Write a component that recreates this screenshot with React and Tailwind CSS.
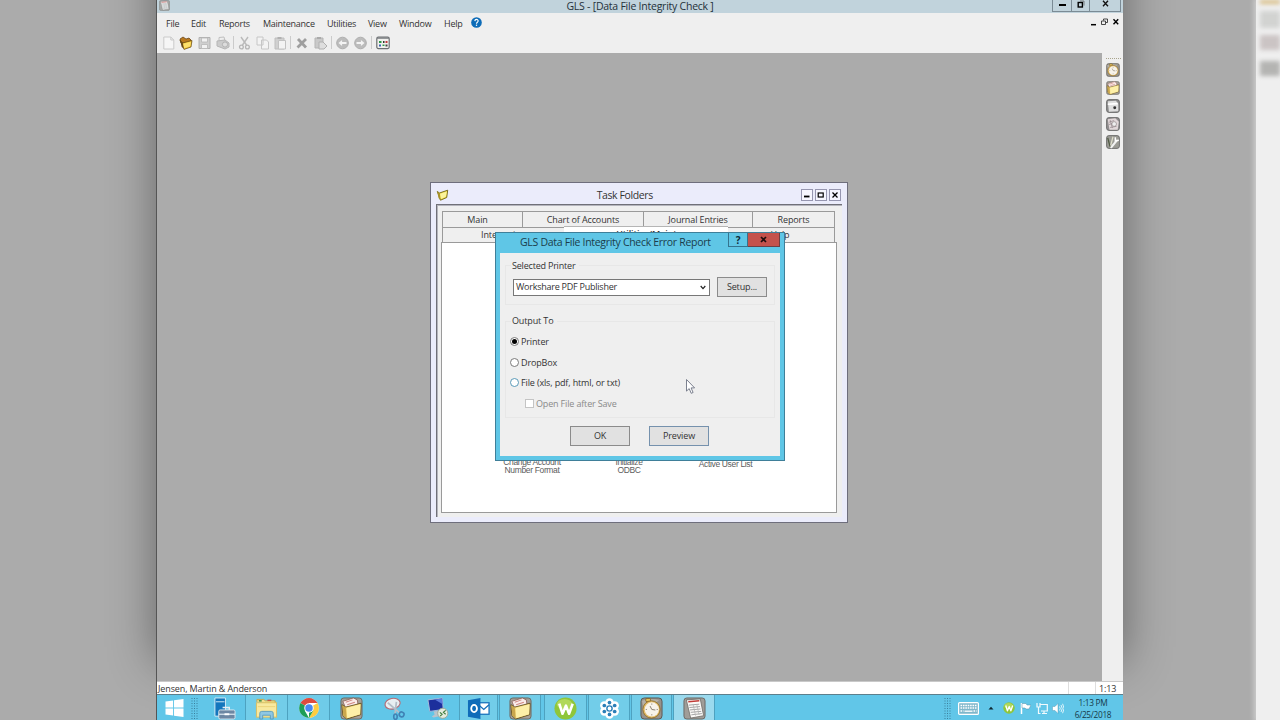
import React from "react";

const FONT = "font-['Open_Sans','Noto_Sans',sans-serif]";

/* ---------- shared drawings ---------- */

function FolderIcon({ className, framed }) {
  return (
    <svg className={className} viewBox="0 0 24 24">
      {framed && <rect x="1" y="1" width="22" height="22" rx="3" fill="#a39f97" stroke="#6b6862" />}
      <path d="M3 4.500 L14 1 L18 3 L19 9 L6 12Z" fill="#faecea" stroke="#8a5a50" strokeWidth=".8" />
      <path d="M6 5.500l7-2.500M7.500 8l8-2.500" stroke="#d08982" strokeWidth="1.100" />
      <path d="M2 8 L6 10.500 L22 6.500 L21.500 18.500 L7 23 L3 19.500Z" fill="#f5d97a" stroke="#5d4a1c" strokeWidth=".9" />
      <path d="M7 11.500 L21.500 7.500 L21 18 L7.500 22Z" fill="#fdf0a8" />
      <path d="M2.500 8.500 L6 11 L7 22.500 L3.400 19.300Z" fill="#c9a64c" />
    </svg>
  );
}

function ClockIcon({ className }) {
  return (
    <svg className={className} viewBox="0 0 24 24">
      <rect x="1" y="1" width="22" height="22" rx="3.5" fill="#96928c" stroke="#5b5853" />
      <path d="M2 4 Q9 1 20 3 L14 8 L4 12Z" fill="#b4afa6" />
      <rect x="6" y="1.5" width="5" height="3.4" rx="1.2" fill="#e3c05d" stroke="#7c5c17" strokeWidth=".8" />
      <circle cx="12" cy="13" r="9" fill="#e3bd6c" stroke="#8c6c27" strokeWidth=".9" />
      <circle cx="12.3" cy="13" r="7.4" fill="#f7f3ea" />
      <path d="M12.3 13 L10.500 9.500 M12.3 13 L16 13.6" stroke="#857a68" strokeWidth="1" />
      <path d="M12.3 6.800v1.200M12.3 18v1.200M6 13h1.200M17.400 13h1.200" stroke="#857a68" strokeWidth=".9" />
    </svg>
  );
}

function ReportIcon({ className }) {
  return (
    <svg className={className} viewBox="0 0 24 24">
      <rect x="1" y="1" width="22" height="22" rx="3" fill="#a09d98" stroke="#6a6864" />
      <path d="M3.500 3 L18 2 L21.500 19.500 L8 22Z" fill="#fbfaf8" stroke="#6a6763" strokeWidth=".8" />
      <path d="M5.500 5 L17 4" stroke="#c13b36" strokeWidth="1.500" />
      <path d="M6 8.500l11-1M6.700 11l11-1M7.300 13.500l11-1M8 16l11-1M8.700 18.600l11-1.3" stroke="#a0a0a0" strokeWidth="1" />
      <path d="M10.500 7.500l2.600 12M14.300 7.300l2.500 11.500" stroke="#b5b5b5" strokeWidth=".8" />
    </svg>
  );
}

function WebBall({ className }) {
  return (
    <svg className={className} viewBox="0 0 24 24">
      <circle cx="12" cy="12" r="11.500" fill="#8fc63a" />
      <ellipse cx="11" cy="7.5" rx="8" ry="5.5" fill="#bfe06a" opacity=".7" />
      <path d="M5.500 7 L8.900 17.5 L12.500 9 L15.700 17.5 L19.500 7" fill="none" stroke="#fff" strokeWidth="2.7" strokeLinejoin="round" />
    </svg>
  );
}

const Sep = ({ className = "" }) => <span className={`h-[13px] w-px shrink-0 bg-[#cbcbcb] ${className}`} />;

/* ---------- top bars ---------- */

function TitleBar() {
  return (
    <div className="flex h-[13px] shrink-0 bg-[#c1d3dc] text-[#25313a]">
      <div className="w-[71px] pl-[2px]">
        <ReportIcon className="-mt-px h-[13px] w-[11px] opacity-80" />
      </div>
      <div className="flex-1 text-center text-[10.5px] leading-[12px] tracking-[-0.24px]">GLS - [Data File Integrity Check ]</div>
      <div className="mr-[2px] flex h-[12px] w-[69px] border border-t-0 border-[#7b8b95] text-black">
        <span className="flex w-[19px] justify-center border-r border-[#7b8b95] pt-[4px]">
          <i className="h-[2px] w-[7px] bg-black" />
        </span>
        <span className="flex w-[18px] justify-center border-r border-[#7b8b95]">
          <svg className="h-[10px] w-[8px]" viewBox="0 0 8 10">
            <rect x="1.200" y="2.500" width="4.200" height="4.500" fill="none" stroke="#000" strokeWidth="1.4" />
            <path d="M3 1h4v4.6" fill="none" stroke="#555" strokeWidth=".7" />
          </svg>
        </span>
        <span className="flex flex-1 justify-center">
          <svg className="h-[7px] w-[7px]" viewBox="0 0 7 7"><path d="M1 .7 6 6.2M6 .7 1 6.2" stroke="#111" strokeWidth="1.3" /></svg>
        </span>
      </div>
    </div>
  );
}

const MENU = [
  ["File", "w-[25px]"],
  ["Edit", "w-[28px]"],
  ["Reports", "w-[44px]"],
  ["Maintenance", "w-[64px]"],
  ["Utilities", "w-[41px]"],
  ["View", "w-[31px]"],
  ["Window", "w-[45px]"],
  ["Help", "w-[27px]"],
];

function MenuBar() {
  return (
    <div className="flex h-[21px] shrink-0 items-center pl-[9px] text-[9px] leading-[12px] tracking-[-0.26px] text-[#333]">
      {MENU.map(([label, w]) => (
        <span key={label} className={`${w} shrink-0 whitespace-nowrap`}>{label}</span>
      ))}
      <svg className="-mt-[2px] h-[11px] w-[11px]" viewBox="0 0 12 12">
        <circle cx="6" cy="6" r="5.8" fill="#0d6cb8" />
        <path d="M4.2 4.5C4.3 2 7.9 2.2 7.8 4.4 7.7 5.8 6 5.8 6 7.3" fill="none" stroke="#fff" strokeWidth="1.3" />
        <rect x="5.3" y="8.3" width="1.4" height="1.4" fill="#fff" />
      </svg>
      <span className="flex-1" />
      <svg className="mr-[4px] -mt-[3px] h-[8px] w-[28px]" viewBox="0 0 28 8">
        <path d="M0 6.7h5" stroke="#000" strokeWidth="1.5" />
        <path d="M12.5 2.5V1h4v3.5H15M10.5 3h4v3.5h-4z" fill="none" stroke="#333" strokeWidth=".9" />
        <path d="M22.5 1.2l4.7 5M27.2 1.2l-4.7 5" stroke="#000" strokeWidth="1.4" />
      </svg>
    </div>
  );
}

function ToolBar() {
  const g = "#c0c0c0";
  return (
    <div className="flex h-[19px] shrink-0 items-start pl-[6px] pt-[2px]">
      <svg className="h-[14px] w-[13px]" viewBox="0 0 13 14"><path d="M.8 1h7l3 3v9h-10zM7.8 1v3h3" fill="#f6f6f6" stroke="#cacaca" /></svg>
      <svg className="ml-[3px] h-[14px] w-[14px]" viewBox="0 0 14 14">
        <path d="M1 3l3-2 3 2 3-1 2 2v3H2z" fill="#b9791e" stroke="#5d3a10" strokeWidth=".7" />
        <path d="M1 4l2.5 3 9.5-2.500-1 6.500-7 2.4z" fill="#f2c230" stroke="#604512" strokeWidth=".7" />
        <path d="M4 7.7l8-2-.8 4.500-6 2z" fill="#fde06a" />
        <path d="M1 3.8l3 3.600.7 5.200-2-1.600z" fill="#6b4a17" />
      </svg>
      <svg className="ml-[5px] h-[14px] w-[13px]" viewBox="0 0 13 14"><path d="M1 1.5h11v11H1z" fill="#cfcfcf" stroke="#b2b2b2" /><path d="M3.5 2h6v4h-6zM3.5 8.5h6v4h-6z" fill="#f1f1f1" stroke="#b8b8b8" strokeWidth=".8" /></svg>
      <svg className="ml-[5px] h-[14px] w-[14px]" viewBox="0 0 14 14"><path d="M3 5V1.5l5-.5 1 4" fill="#eee" stroke={g} /><path d="M1 5l8-1 4 3v4l-4 2-8-3z" fill="#cbcbcb" stroke="#b5b5b5" /><circle cx="9" cy="8.5" r="2.6" fill="#ddd" stroke="#b2b2b2" /></svg>
      <Sep className="ml-[3px]" />
      <svg className="ml-[4px] h-[14px] w-[13px]" viewBox="0 0 13 14"><path d="M3 1l5.5 8M10 1L4.5 9" stroke="#bababa" strokeWidth="1.4" /><circle cx="3.4" cy="11" r="1.9" fill="none" stroke="#b5b5b5" strokeWidth="1.3" /><circle cx="9.4" cy="11" r="1.9" fill="none" stroke="#b5b5b5" strokeWidth="1.3" /></svg>
      <svg className="ml-[5px] h-[14px] w-[14px]" viewBox="0 0 14 14"><path d="M1 1h6v8H1zM5.5 4h5l2 2v7h-7z" fill="#f3f3f3" stroke="#c6c6c6" /></svg>
      <svg className="ml-[4px] h-[14px] w-[13px]" viewBox="0 0 13 14"><path d="M1 2h9v11H1z" fill="#d0d0d0" stroke="#bebebe" /><path d="M4.5 4.5h7V13h-7z" fill="#f3f3f3" stroke="#c2c2c2" /><path d="M3.5 1h4v2h-4z" fill="#b0b0b0" /></svg>
      <Sep className="ml-[3px]" />
      <svg className="ml-[5px] h-[14px] w-[13px]" viewBox="0 0 13 14"><path d="M2 3l8 8.5M10 3l-8.5 8.5" stroke="#9f9f9f" strokeWidth="2.800" /></svg>
      <svg className="ml-[5px] h-[14px] w-[14px]" viewBox="0 0 14 14"><path d="M1 2h8v10H1z" fill="#c9c9c9" stroke="#b5b5b5" /><path d="M3 1h4v2H3z" fill="#aaa" /><path d="M5 6h4l4 4-3 3H5z" fill="#dedede" stroke="#b0b0b0" /></svg>
      <Sep className="ml-[3px]" />
      <svg className="ml-[4px] h-[14px] w-[14px]" viewBox="0 0 14 14"><circle cx="6.500" cy="7" r="5.800" fill="#bcbcbc" stroke="#aeaeae" /><path d="M2.500 7l3.6-3v2h4.400v2H6.100v2z" fill="#f4f4f4" /></svg>
      <svg className="ml-[4px] h-[14px] w-[14px]" viewBox="0 0 14 14"><circle cx="6.500" cy="7" r="5.800" fill="#bcbcbc" stroke="#aeaeae" /><path d="M10.500 7L6.900 4v2H2.500v2h4.400v2z" fill="#f4f4f4" /></svg>
      <Sep className="ml-[3px]" />
      <svg className="ml-[4px] h-[14px] w-[14px]" viewBox="0 0 14 14">
        <rect x=".8" y="1.200" width="12.400" height="11.400" rx="1.500" fill="#f1f1ee" stroke="#6b6f72" strokeWidth="1.200" />
        <path d="M1 2.200h12" stroke="#7d8184" strokeWidth="1.200" />
        <path d="M3 5h2.500v2H3z" fill="#2c9a47" /><path d="M7 5h1.500v2H7z" fill="#333" /><path d="M9.500 5h2v2h-2z" fill="#c43a3a" />
        <path d="M3 8.500h2v2H3z" fill="#3c60b5" /><path d="M6.500 8.500h2v1.500h-2z" fill="#2c9a47" /><path d="M9.500 8.500h2v2h-2z" fill="#444" />
      </svg>
    </div>
  );
}

/* ---------- side toolbar ---------- */

function SideBar() {
  const box = "h-[14px] w-[14px]";
  return (
    <div className="flex w-[21px] shrink-0 flex-col items-start gap-[4px] bg-[#efefef] pl-[3.500px] pt-[4.500px]">
      <span className="h-px w-[15px] border-t border-dotted border-[#a8a48c]" />
      <ClockIcon className={box} />
      <FolderIcon className={box} framed />
      <svg className={box} viewBox="0 0 24 24">
        <rect x="1" y="1" width="22" height="22" rx="4" fill="#8b8b8b" stroke="#666" strokeWidth="1.500" />
        <path d="M3 4l14-1 4 5v13l-16 1z" fill="#dedede" /><path d="M3 9l17-1" stroke="#fff" strokeWidth="3" /><circle cx="15" cy="15" r="2.500" fill="#333" />
      </svg>
      <svg className={box} viewBox="0 0 24 24">
        <rect x="1" y="1" width="22" height="22" rx="4" fill="#928f90" stroke="#666" strokeWidth="1.500" />
        <path d="M3 4l13-2 6 6-2 14-14 0z" fill="#e2d8da" /><path d="M5 9l9-3M5 13l6-2M7 18l11-2M7 5l4 14" stroke="#8d7f83" strokeWidth="1.100" /><circle cx="14" cy="12" r="4" fill="#eee" stroke="#857a7c" />
      </svg>
      <svg className={box} viewBox="0 0 24 24">
        <rect x="1" y="1" width="22" height="22" rx="4" fill="#9b9b95" stroke="#666" strokeWidth="1.500" />
        <path d="M9 21L18 10" stroke="#f2f2f2" strokeWidth="3.600" strokeLinecap="round" /><path d="M16 4l0 6 6-1" fill="none" stroke="#fff" strokeWidth="2.600" />
        <path d="M3 5l4 15" stroke="#4f5a43" strokeWidth="2.200" /><path d="M12 3L8 18" stroke="#dfe0cc" strokeWidth="2" />
      </svg>
    </div>
  );
}

/* ---------- Task Folders window ---------- */

function WinBtn({ children }) {
  return (
    <span className="flex h-[12px] w-[12px] items-center justify-center border border-[#9696b0] bg-[#f6f6ff]">
      <svg className="h-[8px] w-[8px]" viewBox="0 0 8 8">{children}</svg>
    </span>
  );
}

function TaskFolders() {
  const tab = "flex items-center justify-center border-[#9a9a9a] bg-[#efefef]";
  const icon = "absolute text-center font-['Liberation_Sans',sans-serif] text-[8.500px] leading-[8px] tracking-[-0.35px] text-[#5c5c5c] whitespace-nowrap";
  return (
    <div className="absolute left-[273px] top-[182px] flex h-[341px] w-[418px] flex-col border border-[#6e6e7c] bg-[#ebecfb] px-[5px] pb-[5px] text-[9px] tracking-[-0.12px] text-[#333]">
      <div className="flex h-[21px] shrink-0 items-center pt-[3px]">
        <svg className="h-[12px] w-[13px]" viewBox="0 0 12 12">
          <path d="M.8 2.500L3 4l8.200-2.800-1 7.300-6.200 2.700z" fill="#f0d93e" stroke="#6e6212" strokeWidth=".9" />
          <path d="M3.600 4.700l6.700-2.200-.9 5.300-5 2.100z" fill="#fbf39c" /><path d="M.8 2.500L3.300 4.300 4 11.200 2 9z" fill="#a8932a" />
        </svg>
        <span className="flex-1 text-center text-[10.500px] leading-[12px] tracking-[-0.4px]">Task Folders</span>
        <span className="mr-[1.500px] flex gap-[2px]">
          <WinBtn><path d="M1 5.500h5.500" stroke="#000" strokeWidth="1.800" /></WinBtn>
          <WinBtn><rect x="1.200" y="2" width="5" height="4" fill="none" stroke="#000" strokeWidth="1.200" /></WinBtn>
          <WinBtn><path d="M1.500 1.500l5 5M6.500 1.500l-5 5" stroke="#000" strokeWidth="1.300" /></WinBtn>
        </span>
      </div>
      <div className="flex min-h-0 flex-1 flex-col border-l border-t border-[#707078] bg-[#efefef] pl-[4px] pr-[5px] pt-[6px] shadow-[inset_1px_1px_0_#b5b5bd]">
        <div className="ml-[1px] mr-[2px] flex h-[16px] shrink-0 border-l border-t border-[#9a9a9a]">
          <span className={`${tab} w-[80px] border-r pr-[10px] pt-px`}>Main</span>
          <span className={`${tab} w-[121px] border-r pt-px`}>Chart of Accounts</span>
          <span className={`${tab} w-[109px] border-r pt-px`}>Journal Entries</span>
          <span className={`${tab} flex-1 border-r pt-px`}>Reports</span>
        </div>
        <div className="ml-[1px] mr-[2px] flex h-[15px] shrink-0">
          <span className={`${tab} w-[122px] border-l border-t`}>Integration</span>
          <span className="relative -mt-[1px] flex w-[164px] items-center justify-center border-t border-[#b5b5b5] bg-white pb-px pl-px font-semibold">Utilities/Maint</span>
          <span className={`${tab} flex-1 border-r border-t pr-[2px]`}>Help</span>
        </div>
        <div className="relative mb-[4px] flex-1 border border-[#9a9a9a] bg-white">
          <div className={`${icon} left-[52px] top-[215px] w-[76px]`}>Change Account<br />Number Format</div>
          <div className={`${icon} left-[156px] top-[215px] w-[62px]`}>Initialize<br />ODBC</div>
          <div className={`${icon} left-[243px] top-[217px] w-[81px]`}>Active User List</div>
        </div>
      </div>
    </div>
  );
}

/* ---------- Report dialog ---------- */

function Radio({ on, label, tint }) {
  return (
    <div className="flex h-[12px] items-center">
      <span className={`mb-[1px] flex h-[9px] w-[9px] items-center justify-center rounded-full border bg-white ${tint ? "border-[#5a9ab8]" : "border-[#7b7b7b]"}`}>
        {on && <i className="h-[5px] w-[5px] rounded-full bg-black" />}
      </span>
      <span className="ml-[2px] tracking-[-0.14px]">{label}</span>
    </div>
  );
}

function ReportDialog() {
  const btn = "flex items-center justify-center border bg-[#e1e1e1]";
  return (
    <div className="absolute left-[338px] top-[232px] flex h-[229px] w-[290px] flex-col border border-[#3f7f99] bg-[#5fc6e6] px-[4px] pb-[4px] text-[9px] leading-[12px] tracking-[-0.14px] text-[#333]">
      <div className="flex h-[20px] shrink-0">
        <span className="w-[229px] pl-[20px] pt-[3px] text-[10.500px] leading-[13px] tracking-[-0.3px] whitespace-nowrap text-[#1b3d4b]">GLS Data File Integrity Check Error Report</span>
        <span className="flex h-[14px] w-[20px] items-center justify-center border-x border-b border-[#34748f] text-[10px] font-bold text-[#0d2a36]">?</span>
        <span className="flex h-[14px] w-[32px] items-center justify-center border-b border-r border-[#6e3f44] bg-[#c4524c]">
          <svg className="h-[7px] w-[7px]" viewBox="0 0 7 7"><path d="M1 1l5 5M6 1L1 6" stroke="#1d0d0d" strokeWidth="1.700" /></svg>
        </span>
      </div>
      <div className="flex flex-1 flex-col bg-[#efefef] pl-[5px] pr-[5px] pt-[12px]">
        <fieldset className="h-[40px] border border-[#e7e7e7] pl-[7px] pt-[13px]">
          <div className="-ml-[2px] -mt-[19px] flex h-[12px] w-[68px] bg-[#efefef] pl-px whitespace-nowrap tracking-[-0.2px]">Selected Printer</div>
          <div className="mt-[4px] flex items-center">
            <div className="mt-px flex h-[17px] w-[197px] items-center justify-between border border-[#777] bg-white pl-[2px] pr-[3px]">
              <span className="tracking-[-0.24px]">Workshare PDF Publisher</span>
              <svg className="h-[5px] w-[6px]" viewBox="0 0 6 5"><path d="M.7 1l2.300 2.600L5.300 1" fill="none" stroke="#222" strokeWidth="1.200" /></svg>
            </div>
            <div className={`${btn} ml-[7px] mt-[1px] h-[20px] w-[50px] border-[#8b8b8b]`}>Setup...</div>
          </div>
        </fieldset>
        <fieldset className="mt-[16px] h-[97px] border border-[#e7e7e7] pl-[4px]">
          <div className="-mt-[7px] ml-[1px] flex h-[12px] w-[46px] bg-[#efefef] pl-px whitespace-nowrap">Output To</div>
          <div className="mt-[9px] flex flex-col gap-[8.500px]">
            <Radio on label="Printer" />
            <Radio label="DropBox" />
            <Radio tint label="File (xls, pdf, html, or txt)" />
            <div className="flex h-[12px] items-center pl-[15px] text-[#8a8a8a]">
              <span className="h-[9px] w-[9px] border border-[#c4c4c4] bg-white" />
              <span className="ml-[2px] tracking-[-0.16px]">Open File after Save</span>
            </div>
          </div>
        </fieldset>
        <div className="mt-[8px] flex gap-[19px] pl-[65px]">
          <div className={`${btn} h-[20px] w-[60px] border-[#8b8b8b]`}>OK</div>
          <div className={`${btn} h-[20px] w-[60px] border-[#7591ad]`}>Preview</div>
        </div>
      </div>
    </div>
  );
}

/* ---------- taskbar ---------- */

function Grip() {
  return (
    <svg className="h-[25px] w-[7px] shrink-0" viewBox="0 0 7 25">
      <path d="M1 3v22M3.500 3v22M6 3v22" stroke="#3b7f9a" strokeWidth="1" strokeDasharray="1 1.500" />
    </svg>
  );
}

const I = "mt-[2px] h-[23px] w-[23px]";

const TASKS = [
  ["w-[42px]", "", (
    <svg className={I} viewBox="0 0 24 24">
      <path d="M2 1h11v19H2z" fill="#1376bd" stroke="#d5ecf7" strokeWidth="1" /><path d="M3 5h9" stroke="#d5ecf7" />
      <path d="M10 11h7v3" fill="none" stroke="#e8eef2" strokeWidth="1.500" /><rect x="6" y="13.500" width="17" height="9.500" rx="1.500" fill="#6d87a3" stroke="#d9e6ee" /><path d="M6 18h17" stroke="#d9e6ee" strokeWidth="1.300" /><path d="M12 17h5v2h-5z" fill="#fff" />
    </svg>)],
  ["w-[43px]", "border-x border-[#4da2c0] bg-[#72cde9]", (
    <svg className={I} viewBox="0 0 24 24">
      <path d="M2 5V2.500h7L11 4h10v4" fill="#f3df8b" stroke="#c4a64a" /><path d="M4 4h3" stroke="#3a8b45" strokeWidth="1.500" /><path d="M13 3.500h4" stroke="#c45846" strokeWidth="1.500" />
      <rect x="1.500" y="6" width="21" height="15" fill="#f8e99f" stroke="#d9bf62" /><path d="M3 10h18" stroke="#ead27a" />
      <path d="M5 23v-6q0-2 2-2h10q2 0 2 2v6h-3v-4H8v4z" fill="#8fc7e2" stroke="#5a9dbf" />
    </svg>)],
  ["w-[42px]", "border-r border-[#4da2c0] bg-[#6fcbe8]", (
    <svg className="mt-[2px] h-[22px] w-[22px]" viewBox="0 0 24 24">
      <circle cx="12" cy="12" r="10.800" fill="#fff" />
      <path d="M12 12L2.650 6.600A10.800 10.800 0 0 1 21.350 6.600H12z" fill="#dd4b3e" />
      <path d="M12 12L21.350 6.600A10.800 10.800 0 0 1 12 22.800L16.700 14.700z" fill="#fdcd41" />
      <path d="M12 12L7.300 14.700 12 22.800A10.800 10.800 0 0 1 2.650 6.600z" fill="#1e9e58" /><path d="M12 22.800l4.700-8.100-4.700 1z" fill="#1e9e58" />
      <circle cx="12" cy="12" r="5.200" fill="#fff" /><circle cx="12" cy="12" r="4.100" fill="#4688f1" />
    </svg>)],
  ["w-[43px]", "", <FolderIcon className={I} framed />],
  ["w-[43px]", "", (
    <svg className={I} viewBox="0 0 24 24">
      <ellipse cx="10" cy="7" rx="8" ry="5.500" fill="#e8eff2" stroke="#b46b75" strokeWidth="1.200" transform="rotate(-12 10 7)" />
      <path d="M5 6l13 11M14 5l-1.500 13" stroke="#b3bec8" strokeWidth="1.800" /><circle cx="19.500" cy="18" r="2.500" fill="none" stroke="#3f82b5" strokeWidth="1.700" transform="rotate(20 19 18)" /><ellipse cx="13" cy="20.500" rx="1.800" ry="2.800" fill="none" stroke="#3f82b5" strokeWidth="1.700" />
    </svg>)],
  ["w-[43px]", "", (
    <svg className={I} viewBox="0 0 24 24">
      <path d="M2 3l15-2 1 12-14 2z" fill="#1c2f9c" stroke="#a9bcd9" /><path d="M9 2.500l8-1 .5 6z" fill="#5b78dc" /><path d="M8 15l5-.7 1 4 3 1-9 2-2-1 3-2z" fill="#b9c3cc" />
      <circle cx="17.500" cy="17" r="5.300" fill="#e4ecdf" stroke="#9aa895" /><path d="M14.500 16l2.300 2-2 2M20.500 14l-2.300 2 2.300 2" fill="none" stroke="#3e7a3a" strokeWidth="1.200" />
    </svg>)],
  ["w-[39px]", "border-x border-[#4da2c0] bg-[#72cde9]", (
    <svg className={I} viewBox="0 0 24 24">
      <rect x="11" y="6" width="12" height="12" fill="#fff" stroke="#1570bb" strokeWidth="1.300" /><path d="M12 8l5.500 5L23 8" fill="none" stroke="#1570bb" strokeWidth="1.400" />
      <path d="M1 3.500L14 1v22L1 20.500z" fill="#0f6cb9" /><ellipse cx="7.400" cy="12" rx="3" ry="3.700" fill="none" stroke="#fff" strokeWidth="1.900" />
    </svg>)],
  ["w-[42px]", "ml-[1px] border-x border-[#4da2c0] bg-[#72cde9]", <FolderIcon className={I} framed />],
  ["w-[43px]", "ml-[3px] border-x border-[#4da2c0] bg-[#72cde9]", <WebBall className={I} />],
  ["w-[42px]", "ml-[1px] border-x border-[#4da2c0] bg-[#72cde9]", (
    <svg className="mt-[3px] h-[21px] w-[21px]" viewBox="0 0 24 24">
      <g fill="#fff">
        <circle cx="12" cy="5" r="4.800" /><circle cx="18" cy="8.500" r="4.800" /><circle cx="18" cy="15.500" r="4.800" /><circle cx="12" cy="19" r="4.800" /><circle cx="6" cy="15.500" r="4.800" /><circle cx="6" cy="8.500" r="4.800" /><circle cx="12" cy="12" r="6" />
      </g>
      <g fill="#2b7fb8">
        <circle cx="12" cy="5.200" r="2.100" /><circle cx="17.900" cy="8.600" r="2.100" /><circle cx="17.900" cy="15.400" r="2.100" /><circle cx="12" cy="18.800" r="2.100" /><circle cx="6.100" cy="15.400" r="2.100" /><circle cx="6.100" cy="8.600" r="2.100" />
      </g>
      <circle cx="12" cy="12" r="3" fill="#fff" stroke="#2b7fb8" strokeWidth="1.600" />
    </svg>)],
  ["w-[41px]", "ml-[1px] border-x border-[#4da2c0] bg-[#72cde9]", <ClockIcon className={I} />],
  ["w-[42px]", "ml-[1px] border-x border-[#4da2c0] bg-[#9bdaee]", <ReportIcon className={I} />],
];

function TaskBar() {
  return (
    <div className="flex h-[26px] shrink-0 overflow-hidden border-t border-[#5d7f8c] bg-[#61c6e8]">
      <div className="w-[34px] pl-[8px] pt-[4px]">
        <svg className="h-[18px] w-[19px]" viewBox="0 0 19 19"><path d="M0 2.700L8 1.500V9H0zM9 1.400L19 0v9H9zM0 10h8v7.500L0 16.300zM9 10h10v9L9 17.600z" fill="#fff" /></svg>
      </div>
      <Grip />
      <div className="ml-[5px] flex">
        {TASKS.map(([w, cls, icon], i) => (
          <div key={i} className={`flex shrink-0 justify-center ${w} ${cls}`}>{icon}</div>
        ))}
      </div>
      <span className="flex-1" />
      <Grip />
      <div className="flex w-[172px] shrink-0 pl-[7px]">
        <svg className="mt-[7px] h-[13px] w-[21px]" viewBox="0 0 21 13"><rect x=".6" y=".6" width="19.800" height="11.800" rx="1" fill="#7fb7cb" stroke="#fff" strokeWidth="1.200" /><path d="M2.500 3.500h16M2.500 6h16M2.500 9h3M15.500 9h3" stroke="#fff" strokeWidth="1.400" strokeDasharray="1.600 .8" /><path d="M6.500 9.200h8" stroke="#fff" strokeWidth="1.300" /></svg>
        <svg className="ml-[9px] mt-[11px] h-[4px] w-[6px]" viewBox="0 0 6 4"><path d="M.5 3.500L3 .7l2.500 2.800z" fill="#0e2630" /></svg>
        <WebBall className="ml-[9px] mt-[7px] h-[12px] w-[12px]" />
        <svg className="ml-[5px] mt-[7px] h-[13px] w-[11px]" viewBox="0 0 11 13"><path d="M1.500 1v11" stroke="#fff" strokeWidth="1.500" /><path d="M2 1.500h4l1 1.500h4L9 7H6L5 6H2z" fill="#fff" stroke="#4e8ea8" strokeWidth=".5" /></svg>
        <svg className="ml-[5px] mt-[7px] h-[13px] w-[12px]" viewBox="0 0 12 13"><path d="M4 2.500h7.300V9H5M6 11.500h5M8 9v2.500M1 1v4h3V1M2.500 5v6.500h2" fill="none" stroke="#f2fafd" strokeWidth="1.200" /></svg>
        <svg className="ml-[4px] mt-[7px] h-[13px] w-[12px]" viewBox="0 0 12 13"><path d="M.5 4.500H3L6 1.500v10L3 8.500H.500z" fill="#fff" stroke="#4e8ea8" strokeWidth=".4" /><path d="M7.500 4.500q1.500 2 0 4M9 3q2.500 3.500 0 7M10.600 1.800q3 4.700 0 9.400" fill="none" stroke="#fff" strokeWidth=".8" /></svg>
        <div className="ml-[7px] flex w-[44px] shrink-0 flex-col items-center pt-[2px] text-[8.300px] leading-[11.500px] tracking-[-0.3px] whitespace-nowrap text-[#163a48]">
          <span>1:13 PM</span>
          <span>6/25/2018</span>
        </div>
      </div>
    </div>
  );
}

/* ---------- page ---------- */

export default function App() {
  return (
    <div className={`relative flex h-[720px] w-[1280px] overflow-hidden bg-[#ababab] ${FONT}`}>
      <div className="absolute left-[157px] top-[-60px] h-[722px] w-[966px] shadow-[0_0_44px_rgba(0,0,0,0.42)]" />
      <div className="w-[156px] shrink-0" />
      <div className="relative flex w-[967px] shrink-0 flex-col border-l border-[#555] bg-[#efefef]">
        <TitleBar />
        <MenuBar />
        <ToolBar />
        <div className="flex min-h-0 flex-1">
          <div className="flex-1 bg-[#ababab]" />
          <SideBar />
        </div>
        <div className="flex h-[13px] shrink-0 border-t border-[#c9c9c9] bg-white text-[9px] leading-[13px] tracking-[-0.12px] text-[#333]">
          <span className="flex-1 pl-[1px]">Jensen, Martin &amp; Anderson</span>
          <span className="w-[27px] border-l border-[#dedede]" />
          <span className="w-[28px] border-l border-[#dedede] pl-[3px]">1:13</span>
        </div>
        <TaskBar />
        <TaskFolders />
        <ReportDialog />
        <svg className="absolute left-[528px] top-[378px] h-[17px] w-[11px]" viewBox="0 0 11 17">
          <path d="M1.500 1.500v11.600l2.700-2.500 2 4.700 1.900-.8-2-4.600h3.500z" fill="#fff" stroke="#6d7382" strokeWidth=".9" />
        </svg>
      </div>
      <div className="w-[133px] shrink-0" />
      <div className="relative flex-1 bg-[#efefef] shadow-[0_0_5px_2px_#cfcfcf]">
        <div className="flex flex-col items-end gap-[7px] blur-[2px]">
          <span className="h-[4px] w-[20px] bg-[#d8bd85]" />
          <span className="h-[17px] w-[20px] bg-[#d2d3d1]" />
          <span className="h-[15px] w-[20px] bg-[#cbc4c4]" />
          <span className="mt-[4px] h-[15px] w-[20px] bg-[#b4b4b2]" />
        </div>
      </div>
    </div>
  );
}
